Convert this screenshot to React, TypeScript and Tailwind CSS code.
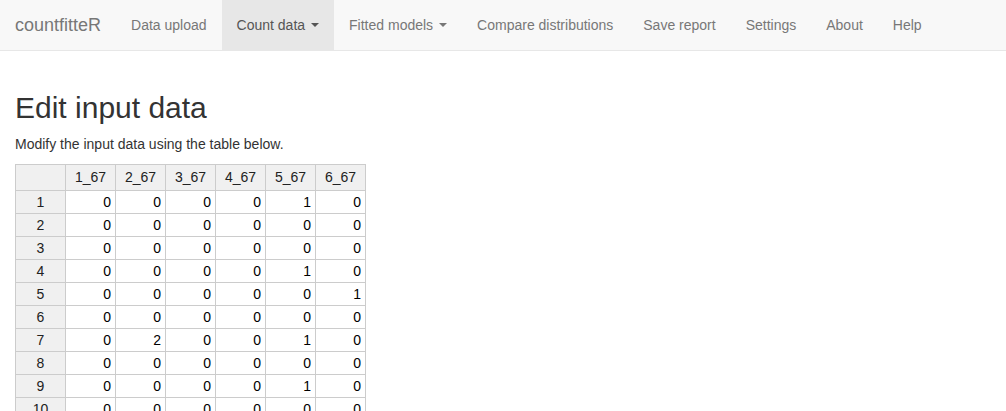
import React from "react";

const navItems = [
  { label: "Data upload" },
  { label: "Count data", caret: true, active: true },
  { label: "Fitted models", caret: true },
  { label: "Compare distributions" },
  { label: "Save report" },
  { label: "Settings" },
  { label: "About" },
  { label: "Help" },
];

const columns = ["1_67", "2_67", "3_67", "4_67", "5_67", "6_67"];

const rows = [
  [0, 0, 0, 0, 1, 0],
  [0, 0, 0, 0, 0, 0],
  [0, 0, 0, 0, 0, 0],
  [0, 0, 0, 0, 1, 0],
  [0, 0, 0, 0, 0, 1],
  [0, 0, 0, 0, 0, 0],
  [0, 2, 0, 0, 1, 0],
  [0, 0, 0, 0, 0, 0],
  [0, 0, 0, 0, 1, 0],
  [0, 0, 0, 0, 0, 0],
];

function Caret() {
  return (
    <span className="ml-[6px] inline-block h-0 w-0 border-x-[4px] border-t-[4px] border-x-transparent border-t-current align-middle" />
  );
}

export default function App() {
  return (
    <div className="h-[411px] overflow-hidden bg-white font-['Liberation_Sans',Arial,sans-serif] text-[14px] text-[#333]">
      {/* Navbar */}
      <nav className="flex h-[51px] border-b border-[#e7e7e7] bg-[#f8f8f8]">
        <a className="px-[15px] text-[18px] leading-[50px] text-[#777]">countfitteR</a>
        <ul className="flex">
          {navItems.map((item) => (
            <li key={item.label}>
              <a
                className={
                  "flex h-[50px] items-center px-[15px] text-[14px] " +
                  (item.active ? "bg-[#e7e7e7] text-[#555]" : "text-[#777]")
                }
              >
                {item.label}
                {item.caret && <Caret />}
              </a>
            </li>
          ))}
        </ul>
      </nav>

      <div className="px-[15px]">
        <h2 className="mt-[40px] mb-[10px] text-[30px] leading-[33px] font-normal text-[#333]">Edit input data</h2>
        <p className="mb-[10px] text-[14px] leading-[20px]">Modify the input data using the table below.</p>

        <table className="w-[350px] table-fixed border-collapse text-[14px] text-[#222]">
          <thead>
            <tr>
              <th className="h-[26px] w-[50px] border border-[#ccc] bg-[#f0f0f0] font-normal" />
              {columns.map((c) => (
                <th key={c} className="h-[26px] w-[50px] border border-[#ccc] bg-[#f0f0f0] px-[4px] text-center font-normal">
                  {c}
                </th>
              ))}
            </tr>
          </thead>
          <tbody>
            {rows.map((r, i) => (
              <tr key={i}>
                <th className="h-[23px] border border-[#ccc] bg-[#f0f0f0] text-center font-normal">{i + 1}</th>
                {r.map((v, j) => (
                  <td key={j} className="h-[23px] border border-[#ccc] bg-white px-[4px] text-right text-black">
                    {v}
                  </td>
                ))}
              </tr>
            ))}
          </tbody>
        </table>
      </div>
    </div>
  );
}
